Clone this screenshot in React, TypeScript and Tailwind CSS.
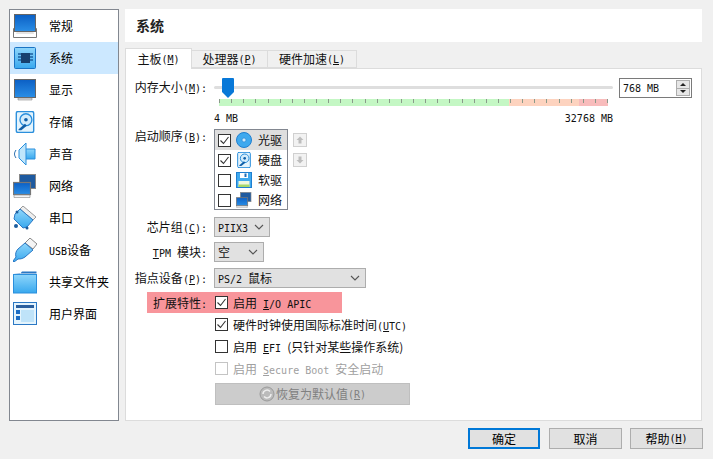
import React from 'react'

const cjk = "font-['Noto_Sans_CJK_SC','Noto_Sans_CJK_JP',sans-serif]"
const latin = "font-['DejaVu_Sans_Mono',monospace] text-[10px]"

function En({ children, u }: { children?: React.ReactNode; u?: string }) {
  return (
    <span className={`${latin} whitespace-pre`}>
      {u && <span className="underline">{u}</span>}
      {children}
    </span>
  )
}

function Key({ k, colon }: { k: string; colon?: boolean }) {
  return (
    <span className={latin}>
      (<span className="underline">{k}</span>){colon ? ':' : ''}
    </span>
  )
}

function Grad() {
  return (
    <svg width="0" height="0" className="absolute">
      <defs>
        <linearGradient id="blue" x1="0" y1="0" x2="0" y2="1">
          <stop offset="0" stopColor="#0b5fc4" />
          <stop offset="1" stopColor="#2a8ee6" />
        </linearGradient>
        <linearGradient id="sky" x1="0" y1="0" x2="0" y2="1">
          <stop offset="0" stopColor="#8fd6fb" />
          <stop offset="1" stopColor="#38a8ee" />
        </linearGradient>
      </defs>
    </svg>
  )
}

function IconGeneral() {
  return (
    <svg width="24" height="24" viewBox="0 0 24 24">
      <path d="M0.5 14.5h23v9h-23z" fill="#fff" stroke="#777" />
      <path d="M4 17h16l1 3H3z" fill="#e4e4e4" />
      <rect x="1.5" y="0.5" width="21" height="17" fill="url(#blue)" stroke="#666" />
    </svg>
  )
}
function IconSystem() {
  return (
    <svg width="24" height="24" viewBox="0 0 24 24">
      <rect x="1.5" y="1.5" width="21" height="21" rx="1" fill="url(#sky)" stroke="#1a74c4" />
      <rect x="8" y="7" width="9" height="10" fill="#17406e" />
      <path d="M5 8h3M5 11h3M5 14h3M17 8h3M17 11h3M17 14h3" stroke="#1b5d9e" strokeWidth="1.5" />
    </svg>
  )
}
function IconDisplay() {
  return (
    <svg width="24" height="24" viewBox="0 0 24 24">
      <rect x="1.5" y="1.5" width="21" height="18" fill="url(#blue)" stroke="#666" />
      <path d="M5 20h14v2H5z" fill="#ddd" stroke="#777" strokeWidth="0.5" />
    </svg>
  )
}
function IconDisk({ size = 22 }: { size?: number }) {
  return (
    <svg width={size} height={size} viewBox="0 0 22 24">
      <rect x="1.5" y="0.5" width="19" height="23" rx="2" fill="#e4f4fd" stroke="#2b8fdc" strokeWidth="1.5" />
      <circle cx="12" cy="9.5" r="6.5" fill="#d3ecfb" stroke="#2b8fdc" strokeWidth="1.5" />
      <circle cx="12" cy="9.5" r="2" fill="#0f5fa8" />
      <path d="M4 20l7-6 2 2-6 5H4z" fill="#0f5fa8" />
    </svg>
  )
}
function IconAudio() {
  return (
    <svg width="24" height="24" viewBox="0 0 24 24">
      <path d="M12 12V7h10v10H12z" fill="url(#sky)" stroke="#2b8fdc" />
      <path d="M6 8l7-7v22l-7-7z" fill="#bfe6fb" stroke="#2b8fdc" />
      <path d="M3 8c-2 3-2 5 0 8" fill="none" stroke="#2b6fb0" />
    </svg>
  )
}
function IconNetwork({ size = 24 }: { size?: number }) {
  return (
    <svg width={size} height={size} viewBox="0 0 24 24">
      <rect x="6.5" y="0.5" width="16" height="14" fill="#1e5aa0" stroke="#888" />
      <rect x="0.5" y="8.5" width="17" height="12" fill="url(#blue)" stroke="#777" strokeWidth="1.2" />
      <path d="M1 21h16v2.5H1z" fill="#f4f4f4" stroke="#888" strokeWidth="0.6" />
    </svg>
  )
}
function IconSerial() {
  return (
    <svg width="24" height="24" viewBox="0 0 24 24">
      <path d="M10 0l13 11-3 3L7 3z" fill="#eee" stroke="#999" />
      <path d="M7 3l13 11-6 7-4 1L1 13l1-5z" fill="url(#sky)" stroke="#2b78c4" />
      <circle cx="3" cy="20" r="2" fill="#1b5d9e" />
      <circle cx="14" cy="22" r="1.5" fill="#1b5d9e" />
      <circle cx="4" cy="6" r="1.5" fill="#1b5d9e" />
    </svg>
  )
}
function IconUsb() {
  return (
    <svg width="24" height="24" viewBox="0 0 24 24">
      <path d="M17 0l7 6-4 5-8-6z" fill="#f5f5f5" stroke="#888" />
      <path d="M12 5l8 7-8 7c-3 2-5 2-7 2l-4 3-1-1 3-4c-1-3 0-6 2-8z" fill="url(#sky)" stroke="#2b78c4" />
    </svg>
  )
}
function IconFolder() {
  return (
    <svg width="24" height="24" viewBox="0 0 24 24">
      <path d="M0.5 3.5h23V1.5H9L7 4z" fill="#2b78c4" />
      <rect x="0.5" y="4.5" width="23" height="18.5" fill="url(#sky)" stroke="#2b8fdc" />
    </svg>
  )
}
function IconUi() {
  return (
    <svg width="24" height="24" viewBox="0 0 24 24">
      <rect x="0.5" y="0.5" width="23" height="22" fill="#e4f4fd" stroke="#2b78c4" />
      <rect x="3" y="3" width="18" height="3" fill="#2b5f9e" />
      <rect x="3" y="8" width="4" height="4" fill="#1a6cc4" />
      <rect x="3" y="14" width="4" height="4" fill="#1a6cc4" />
      <rect x="8" y="8" width="13" height="12" fill="#bfe3f9" />
    </svg>
  )
}
function IconCd() {
  return (
    <svg width="16" height="16" viewBox="0 0 16 16">
      <circle cx="8" cy="8" r="7.5" fill="#3fa9ee" stroke="#1f7fd0" />
      <circle cx="8" cy="8" r="2" fill="#cfeafb" stroke="#1f7fd0" strokeWidth="0.6" />
    </svg>
  )
}
function IconFloppy() {
  return (
    <svg width="16" height="16" viewBox="0 0 16 16">
      <rect x="0.5" y="0.5" width="15" height="15" fill="#3fa9ee" stroke="#1f7fd0" />
      <rect x="4" y="1" width="8" height="5" fill="#fff" />
      <rect x="8.5" y="1.5" width="2" height="3.5" fill="#1f6fb8" />
      <rect x="2.5" y="9" width="11" height="6" fill="#eef8e0" />
      <rect x="2.5" y="12.5" width="11" height="2.5" fill="#a6d86a" />
    </svg>
  )
}

function Check({ on, off }: { on?: boolean; off?: boolean }) {
  const border = off ? 'border-[#c4c4c4] bg-white' : 'border-[#333] bg-white'
  return (
    <span className={`flex h-[13px] w-[13px] shrink-0 items-center justify-center border ${border}`}>
      {on && (
        <svg width="11" height="11" viewBox="0 0 11 11">
          <path d="M1.5 5.5l3 3 5-6.5" fill="none" stroke="#333" strokeWidth="1.1" />
        </svg>
      )}
    </span>
  )
}

function Chevron() {
  return (
    <svg width="10" height="6" viewBox="0 0 10 6" className="shrink-0">
      <path d="M1 1l4 4 4-4" fill="none" stroke="#555" strokeWidth="1.1" />
    </svg>
  )
}

function Combo({ width, children }: { width: string; children: React.ReactNode }) {
  return (
    <div className={`flex h-[20px] items-center justify-between border border-[#adadad] bg-[#e1e1e1] pl-[3px] pr-[5px] text-[#111] ${width}`}>
      <span>{children}</span>
      <Chevron />
    </div>
  )
}

function Label({ children, className = '' }: { children: React.ReactNode; className?: string }) {
  return <div className={`w-[82px] shrink-0 whitespace-nowrap pr-[1px] text-right ${className}`}>{children}</div>
}

const navItems: { name: React.ReactNode; icon: React.ReactNode; active?: boolean }[] = [
  { name: '常规', icon: <IconGeneral /> },
  { name: '系统', icon: <IconSystem />, active: true },
  { name: '显示', icon: <IconDisplay /> },
  { name: '存储', icon: <IconDisk /> },
  { name: '声音', icon: <IconAudio /> },
  { name: '网络', icon: <IconNetwork /> },
  { name: '串口', icon: <IconSerial /> },
  { name: <><En>USB</En>设备</>, icon: <IconUsb /> },
  { name: '共享文件夹', icon: <IconFolder /> },
  { name: '用户界面', icon: <IconUi /> },
]

const boot = [
  { name: '光驱', on: true, icon: <IconCd />, active: true },
  { name: '硬盘', on: true, icon: <IconDisk size={16} /> },
  { name: '软驱', on: false, icon: <IconFloppy /> },
  { name: '网络', on: false, icon: <IconNetwork size={16} /> },
]

function Sidebar() {
  return (
    <aside className="h-[412px] w-[110px] shrink-0 border border-[#828790] bg-white">
      {navItems.map((item, i) => (
        <div key={i} className={`flex h-[32px] items-center pl-[3px] ${item.active ? 'bg-[#cce8ff]' : ''}`}>
          <span className="flex w-[24px] justify-center">{item.icon}</span>
          <span className="ml-[12px] whitespace-nowrap text-[12px] text-black">{item.name}</span>
        </div>
      ))}
    </aside>
  )
}

function ScaleBar() {
  return (
    <div className="relative ml-[5px] mt-[1px] flex h-[7px] w-[389px]">
      <div className="w-[290px] bg-[#c4f7c4]" />
      <div className="w-[70px] bg-[#fdd3bf]" />
      <div className="flex-1 bg-[#f8bcbc]" />
      <div className="absolute inset-x-0 top-0 flex h-[4px] justify-between">
        {Array.from({ length: 33 }).map((_, i) => (
          <span key={i} className="w-px bg-[#8a9a8a]" />
        ))}
      </div>
    </div>
  )
}

function ArrowBtn({ up }: { up?: boolean }) {
  return (
    <div className="flex h-[14px] w-[14px] items-center justify-center border border-[#d0d0d0] bg-[#f2f2f2]">
      <svg width="8" height="8" viewBox="0 0 8 8">
        <path d={up ? 'M4 0.5L7.5 4H5.5v3.5h-3V4H0.5z' : 'M4 7.5L7.5 4H5.5V0.5h-3V4H0.5z'} fill="#bdbdbd" />
      </svg>
    </div>
  )
}

function SystemPane() {
  return (
    <div className="h-[353px] border border-[#dcdcdc] bg-white text-[12px] text-[#111]">
      {/* memory */}
      <div className="mt-[9px] flex">
        <Label>内存大小<Key k="M" colon /></Label>
        <div className="ml-[6px] w-[400px]">
          <div className="relative h-[20px]">
            <div className="absolute left-0 right-px top-[8px] h-[3px] rounded-full bg-[#dedede]" />
            <svg width="12" height="20" viewBox="0 0 12 20" className="absolute left-[8px] top-0">
              <path d="M1 0h10a1 1 0 0 1 1 1v13l-6 6-6-6V1a1 1 0 0 1 1-1z" fill="#0878d8" />
            </svg>
          </div>
          <ScaleBar />
          <div className="mt-[5px] flex justify-between pr-[1px]">
            <En>4 MB</En>
            <En>32768 MB</En>
          </div>
        </div>
        <div className="ml-[5px] flex h-[20px] w-[73px] items-center justify-between border border-[#7a7a7a] bg-white pl-[3px] pr-[1px]">
          <En>768 MB</En>
          <div className="flex h-[16px] w-[14px] flex-col border border-[#adadad] bg-[#e6e6e6]">
            <div className="flex flex-1 items-center justify-center border-b border-[#adadad]">
              <div className="h-0 w-0 border-x-[3px] border-b-[3px] border-x-transparent border-b-[#222]" />
            </div>
            <div className="flex flex-1 items-center justify-center">
              <div className="h-0 w-0 border-x-[3px] border-t-[3px] border-x-transparent border-t-[#222]" />
            </div>
          </div>
        </div>
      </div>

      {/* boot order */}
      <div className="mt-[3px] flex">
        <Label className="-mt-[2px]">启动顺序<Key k="B" colon /></Label>
        <div className="ml-[6px] h-[81px] w-[74px] border border-[#828790]">
          {boot.map((b) => (
            <div key={b.name} className={`flex h-[20px] items-center pl-[3px] ${b.active ? 'bg-[#dedede]' : ''}`}>
              <Check on={b.on} />
              <span className="ml-[5px]">{b.icon}</span>
              <span className="ml-[6px]">{b.name}</span>
            </div>
          ))}
        </div>
        <div className="ml-[5px] mt-[4px] flex flex-col gap-[6px]">
          <ArrowBtn up />
          <ArrowBtn />
        </div>
      </div>

      {/* combos */}
      <div className="mt-[7px] flex items-center">
        <Label>芯片组<Key k="C" colon /></Label>
        <div className="ml-[6px]"><Combo width="w-[56px]"><En>PIIX3</En></Combo></div>
      </div>
      <div className="mt-[5px] flex items-center">
        <Label><En u="T">PM </En>模块<En>:</En></Label>
        <div className="ml-[6px]"><Combo width="w-[50px]">空</Combo></div>
      </div>
      <div className="mt-[6px] flex items-center">
        <Label>指点设备<Key k="P" colon /></Label>
        <div className="ml-[6px]"><Combo width="w-[152px]"><En>PS/2 </En>鼠标</Combo></div>
      </div>

      {/* extended features */}
      <div className="ml-[21px] mt-[4px] flex h-[21px] w-[195px] items-center bg-[#f8959b]">
        <div className="w-[60px] shrink-0 text-right">扩展特性<En>:</En></div>
        <div className="ml-[8px] flex items-center gap-[5px]">
          <Check on />
          <span>启用<En> </En><En u="I">/O APIC</En></span>
        </div>
      </div>
      <div className="ml-[89px] mt-[1px] flex h-[21px] items-center gap-[5px]">
        <Check on />
        <span>硬件时钟使用国际标准时间<span className={latin}>(<span className="underline">U</span>TC)</span></span>
      </div>
      <div className="ml-[89px] mt-[1px] flex h-[21px] items-center gap-[5px]">
        <Check />
        <span>启用<En> </En><En u="E">FI </En>(只针对某些操作系统)</span>
      </div>
      <div className="ml-[89px] mt-[1px] flex h-[21px] items-center gap-[5px] text-[#a0a0a0]">
        <Check off />
        <span>启用<En> </En><En u="S">ecure Boot </En>安全启动</span>
      </div>
      <div className="ml-[89px] mt-[4px] flex h-[22px] w-[195px] items-center justify-center border border-[#bfbfbf] bg-[#cccccc] text-[#808080]">
        <svg width="16" height="16" viewBox="0 0 16 16" className="mr-px">
          <circle cx="8" cy="8" r="7" fill="#bbb" stroke="#9a9a9a" />
          <path d="M4 8a4 4 0 0 1 7-2.5M12 8a4 4 0 0 1-7 2.5" fill="none" stroke="#eee" strokeWidth="1.5" />
        </svg>
        恢复为默认值<Key k="R" />
      </div>
    </div>
  )
}

function Main() {
  return (
    <main className="flex h-[412px] w-[577px] flex-col">
      <div className="flex h-[33px] items-center bg-white pl-[11px] text-[14px] font-bold text-[#222]">系统</div>
      <div className="mt-[6px] flex h-[20px] items-end text-[12px] text-[#111]">
        <div className="z-10 -mb-px flex h-[21px] w-[67px] items-center justify-center border border-b-0 border-[#dcdcdc] bg-white">
          主板<Key k="M" />
        </div>
        <div className="flex h-[18px] w-[76px] items-center justify-center border border-l-0 border-[#dcdcdc] bg-[#f0f0f0]">
          处理器<Key k="P" />
        </div>
        <div className="flex h-[18px] w-[89px] items-center justify-center border border-l-0 border-[#dcdcdc] bg-[#f0f0f0]">
          硬件加速<Key k="L" />
        </div>
      </div>
      <SystemPane />
    </main>
  )
}

function Btn({ children, primary, width }: { children: React.ReactNode; primary?: boolean; width: string }) {
  return (
    <div className={`flex h-[21px] items-center justify-center bg-[#e1e1e1] text-[12px] text-black ${width} ${primary ? 'mr-px border-2 border-[#0078d7]' : 'border border-[#adadad]'}`}>
      {children}
    </div>
  )
}

export default function App() {
  return (
    <div className={`relative flex h-[459px] w-[713px] flex-col overflow-hidden bg-[#f0f0f0] ${cjk}`}>
      <Grad />
      <div className="flex gap-[6px] pl-[9px] pt-[9px]">
        <Sidebar />
        <Main />
      </div>
      <div className="mt-[7px] flex justify-end gap-[8px] pr-[10px]">
        <Btn primary width="w-[72px]">确定</Btn>
        <Btn width="w-[73px]">取消</Btn>
        <Btn width="w-[73px]">帮助<Key k="H" /></Btn>
      </div>
    </div>
  )
}
